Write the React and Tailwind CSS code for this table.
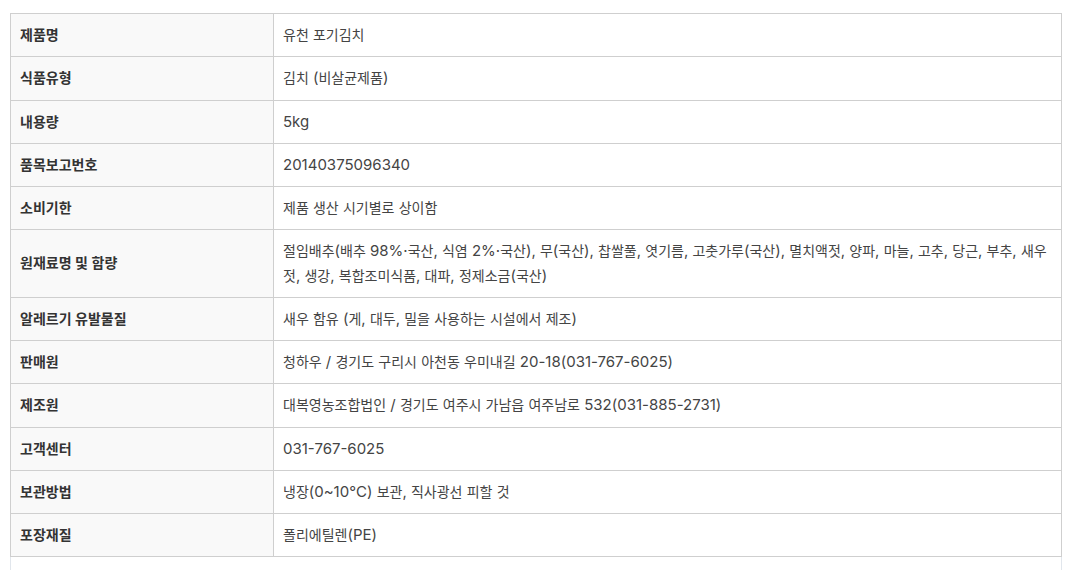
import React from "react";

const rows = [
  ["제품명", "유천 포기김치"],
  ["식품유형", "김치 (비살균제품)"],
  ["내용량", "5kg"],
  ["품목보고번호", "20140375096340"],
  ["소비기한", "제품 생산 시기별로 상이함"],
  [
    "원재료명 및 함량",
    "절임배추(배추 98%·국산, 식염 2%·국산), 무(국산), 찹쌀풀, 엿기름, 고춧가루(국산), 멸치액젓, 양파, 마늘, 고추, 당근, 부추, 새우젓, 생강, 복합조미식품, 대파, 정제소금(국산)",
  ],
  ["알레르기 유발물질", "새우 함유 (게, 대두, 밀을 사용하는 시설에서 제조)"],
  ["판매원", "청하우 / 경기도 구리시 아천동 우미내길 20-18(031-767-6025)"],
  ["제조원", "대복영농조합법인 / 경기도 여주시 가남읍 여주남로 532(031-885-2731)"],
  ["고객센터", "031-767-6025"],
  ["보관방법", "냉장(0~10°C) 보관, 직사광선 피할 것"],
  ["포장재질", "폴리에틸렌(PE)"],
];

// hangul runs get a slightly smaller size so they sit like the original web font
function Mixed({ text }) {
  return text.split(/([\uAC00-\uD7A3\u3131-\u318E]+)/).map((part, i) =>
    i % 2 === 1 ? (
      <span key={i} className="text-[14px] leading-none">
        {part}
      </span>
    ) : (
      part
    )
  );
}

export default function App() {
  return (
    <div className="bg-white h-[570px] overflow-hidden pt-[13px] font-['Inter','Noto_Sans_CJK_KR',sans-serif] text-[15px]">
      <div className="ml-[10px] w-[1052px] h-[600px] border-x border-[#e1e6ec]">
        <table className="w-[1052px] -mx-px border-collapse table-fixed">
          <colgroup>
            <col className="w-[263px]" />
            <col />
          </colgroup>
          <tbody>
            {rows.map(([label, value]) => (
              <tr key={label}>
                <th className="bg-[#f9f9f9] border border-[#cfcfcf] text-left align-middle font-bold text-[#333] px-[9px] py-[9px] leading-[24.25px]">
                  <Mixed text={label} />
                </th>
                <td className="border border-[#cfcfcf] text-left align-middle text-[#444] px-[9px] py-[9px] leading-[24.25px]">
                  <Mixed text={value} />
                </td>
              </tr>
            ))}
          </tbody>
        </table>
      </div>
    </div>
  );
}
